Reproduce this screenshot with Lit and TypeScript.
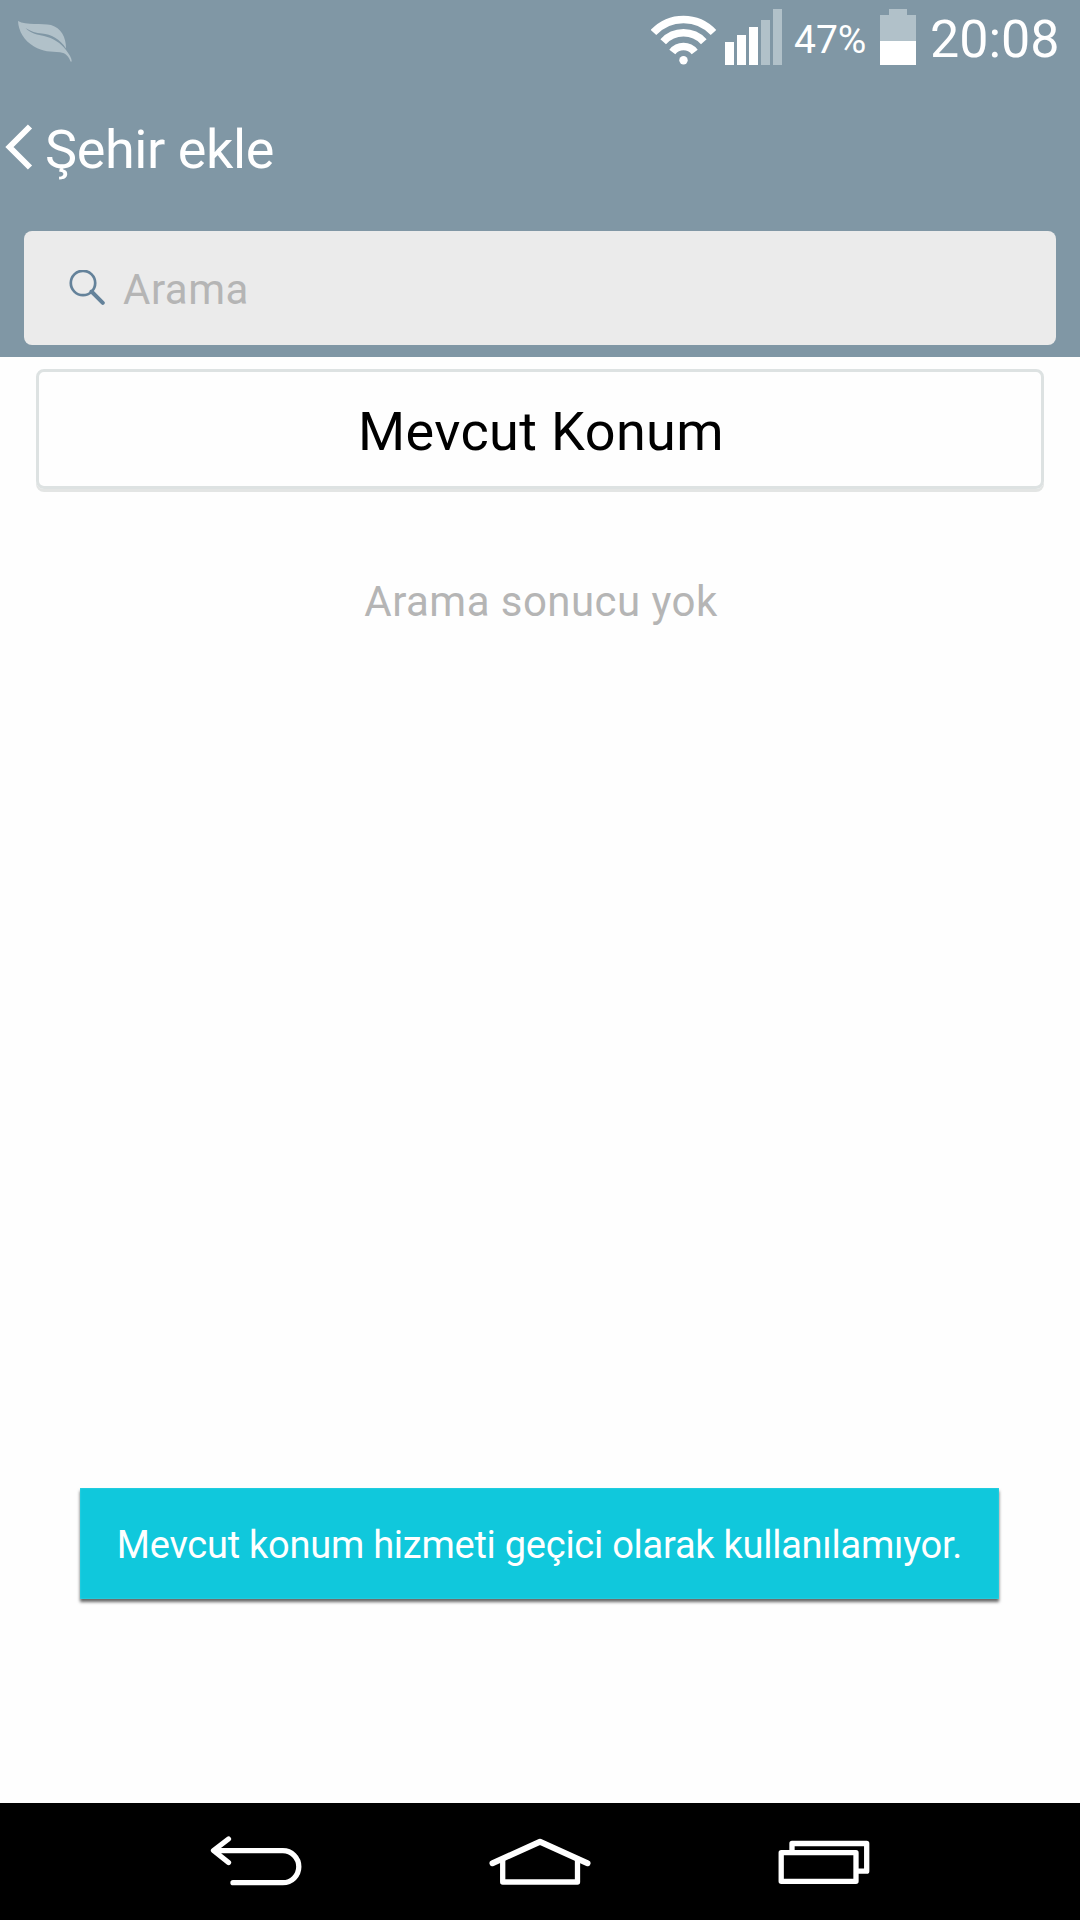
import { LitElement, html, svg, css } from "lit";
import { customElement } from "lit/decorators.js";

const signalBars = [
  { x: 0, top: 42, on: true },
  { x: 12, top: 35, on: true },
  { x: 24, top: 27, on: true },
  { x: 36, top: 20, on: false },
  { x: 48, top: 9, on: false },
];

@customElement("status-bar")
class StatusBar extends LitElement {
  static styles = css`
    :host {
      display: flex;
      height: 75px;
      box-sizing: border-box;
      padding: 0 23px 0 16px;
      color: #fff;
      line-height: 80px;
      white-space: nowrap;
    }
    svg {
      display: block;
      flex: none;
    }
    .spacer {
      flex: 1;
    }
    .wifi {
      margin-right: 8px;
    }
    .signal {
      margin-right: 12px;
    }
    .percent {
      width: 86px;
      font-size: 39px;
      line-height: 81px;
    }
    .battery {
      margin-right: 14px;
    }
    .clock {
      width: 127px;
      font-size: 52px;
    }
  `;

  render() {
    return html`
      <svg width="58" height="75" viewBox="16 0 58 75">
        <path
          fill="#b1c1c9"
          d="M18 21 C26 25.500 42 23 51 25 C61 28 66 37 66 48.500 C60 39 51 34.500 42 33.600 C36 33 31 31.500 25.500 28 C31 33.500 38 35 44 36 C53 38 61 43 66 50 C69 54 71.500 57.500 71.800 61.500 L70.500 61.500 C69 57 66 53 60 52.300 C51 51.500 43 52 34 46.500 C24 40.500 18.500 31 18 21Z"
        />
      </svg>
      <div class="spacer"></div>
      <svg class="wifi" width="66" height="75" viewBox="651 0 66 75">
        <g fill="none" stroke="#fff" stroke-width="7.6">
          <path d="M653.500 32.500 A41 41 0 0 1 713.500 32.500" />
          <path d="M663.200 41.700 A27.600 27.600 0 0 1 703.800 41.700" />
          <path d="M672.300 52 A14.200 14.200 0 0 1 694.700 52" />
        </g>
        <circle cx="683.500" cy="60.300" r="4.200" fill="#fff" />
      </svg>
      <svg class="signal" width="57" height="75" viewBox="0 0 57 75">
        ${signalBars.map(
          (b) => svg`<rect x=${b.x} y=${b.top} width="9" height=${65 - b.top} fill=${b.on ? "#fff" : "#b1c1c9"} />`
        )}
      </svg>
      <div class="percent">47%</div>
      <svg class="battery" width="36" height="75" viewBox="0 0 36 75">
        <path d="M9 9h18v6h9v26H0V15h9z" fill="#b1c1c9" />
        <rect y="41" width="36" height="24" fill="#fff" />
      </svg>
      <div class="clock">20:08</div>
    `;
  }
}

@customElement("nav-bar")
class NavBar extends LitElement {
  static styles = css`
    :host {
      display: flex;
      justify-content: center;
      gap: 184px;
      height: 117px;
      background: #000;
    }
    svg {
      display: block;
      width: 100px;
      height: 117px;
      fill: none;
      stroke: #fff;
      stroke-width: 5.3;
      stroke-linejoin: round;
      stroke-linecap: round;
    }
  `;

  render() {
    return html`
      <svg viewBox="206 1803 100 117">
        <path d="M228.500 1839 L213.500 1850.500 L228.500 1862.500 M214 1850.700 H282.800 A16 16 0 0 1 282.800 1882.700 H233" />
      </svg>
      <svg viewBox="490 1803 100 117" overflow="visible">
        <path d="M492.500 1863.200 L540 1841.800 L587.500 1863.200" stroke-width="6" />
        <path d="M502.700 1859 V1882 H577.500 V1859" />
      </svg>
      <svg viewBox="774 1803 100 117">
        <path d="M792 1850 V1843.500 H866.700 V1871.200 H858" stroke-linecap="butt" />
        <rect x="781.200" y="1852.700" width="74.800" height="28.600" />
      </svg>
    `;
  }
}

@customElement("app-root")
class AppRoot extends LitElement {
  static styles = css`
    :host {
      display: flex;
      flex-direction: column;
      position: relative;
      width: 1080px;
      height: 1920px;
      overflow: hidden;
      background: #fefefe;
      font-family: Roboto, "Noto Sans", sans-serif;
      white-space: nowrap;
    }
    svg {
      display: block;
      flex: none;
    }
    .header {
      height: 357px;
      background: #8097a5;
    }
    .title-row {
      display: flex;
      height: 156px;
      color: #fff;
      font-size: 54px;
      line-height: 149px;
      letter-spacing: -0.4px;
    }
    .back {
      margin-right: 12px;
    }
    .search {
      display: flex;
      align-items: center;
      height: 114px;
      margin: 0 24px;
      padding-left: 45px;
      box-sizing: border-box;
      border-radius: 8px;
      background: #ebebeb;
      color: #b5b5b5;
      font-size: 42px;
      line-height: 114px;
      letter-spacing: 0.5px;
    }
    .hint {
      padding-top: 3px;
    }
    .glass {
      margin-right: 18px;
    }
    .content {
      flex: 1;
      display: flex;
      flex-direction: column;
      padding: 12px 36px 0;
    }
    .location {
      height: 120px;
      box-sizing: border-box;
      padding-left: 2px;
      border: 3px solid #dde2e2;
      border-radius: 8px;
      box-shadow: 0 3px 0 #e3e5e4;
      color: #000;
      font-size: 54px;
      line-height: 119px;
      letter-spacing: 0.4px;
      text-align: center;
    }
    .empty {
      margin-top: 82px;
      padding-left: 2px;
      color: #b5b5b5;
      font-size: 42px;
      line-height: 61px;
      letter-spacing: 0.45px;
      text-align: center;
    }
    .toast {
      position: absolute;
      left: 80px;
      top: 1488px;
      width: 919px;
      height: 111px;
      box-sizing: border-box;
      background: #10c8dc;
      box-shadow: 0 3px 3px rgba(0, 0, 0, 0.6), inset 0 0 2px #4fd8e6;
      color: #fff;
      font-size: 38px;
      line-height: 115px;
      letter-spacing: -0.25px;
      text-align: center;
    }
  `;

  render() {
    return html`
      <div class="header">
        <status-bar></status-bar>
        <div class="title-row">
          <svg class="back" width="33" height="149" viewBox="0 75 33 149">
            <path d="M30 126.500 L9.500 147 L30 167.500" fill="none" stroke="#fff" stroke-width="5.900" />
          </svg>
          <div class="title">Şehir ekle</div>
        </div>
        <div class="search">
          <svg class="glass" width="36" height="36" viewBox="69 270 36 36">
            <g fill="none" stroke="#64829a">
              <circle cx="83" cy="283" r="12.200" stroke-width="2.700" />
              <path d="M91.500 291.500 L102.800 302.800" stroke-width="4" stroke-linecap="round" />
            </g>
          </svg>
          <span class="hint">Arama</span>
        </div>
      </div>
      <div class="content">
        <div class="location"><span>Mevcut Konum</span></div>
        <div class="empty"><span>Arama sonucu yok</span></div>
      </div>
      <nav-bar></nav-bar>
      <div class="toast"><span>Mevcut konum hizmeti geçici olarak kullanılamıyor.</span></div>
    `;
  }
}
